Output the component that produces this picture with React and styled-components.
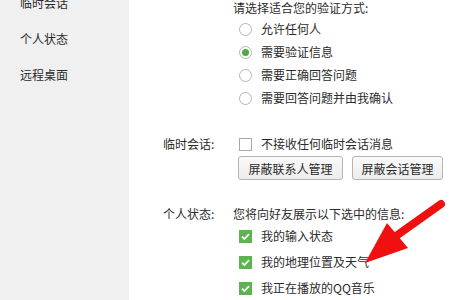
import React from "react";
import styled, { createGlobalStyle } from "styled-components";

const GlobalStyle = createGlobalStyle`
  html, body {
    margin: 0;
    padding: 0;
    background: #ffffff;
  }
  body {
    font-family: "Microsoft YaHei", "Noto Sans CJK SC", "Noto Sans", sans-serif;
    font-size: 12px;
    color: #2b2b2b;
  }
`;

const Page = styled.div`
  position: relative;
  display: flex;
  width: 450px;
  height: 300px;
  overflow: hidden;
`;

const Sidebar = styled.div`
  width: 129px;
  flex-shrink: 0;
  background: #f0f0f0;
  display: flex;
  flex-direction: column;
  gap: 18px;
  padding: 0 0 0 20px;
  margin-top: -6px;
  box-sizing: border-box;
`;

const NavItem = styled.div`
  height: 18px;
  line-height: 18px;
`;

const Main = styled.div`
  flex: 1;
  display: flex;
  flex-direction: column;
  padding-left: 34px;
  margin-top: -2px;
`;

const Section = styled.div`
  display: flex;
  margin-top: ${(p) => p.$top || 0}px;
`;

const Label = styled.div`
  width: 70px;
  flex-shrink: 0;
  height: 20px;
  line-height: 20px;
`;

const Body = styled.div`
  display: flex;
  flex-direction: column;
`;

const Heading = styled.div`
  height: 20px;
  line-height: 20px;
`;

const Options = styled.div`
  display: flex;
  flex-direction: column;
  gap: ${(p) => p.$gap}px;
  padding-left: 6px;
  margin-top: ${(p) => p.$top || 0}px;
`;

const Option = styled.label`
  display: flex;
  align-items: center;
  gap: 9px;
  height: 20px;
  line-height: 20px;
`;

const Radio = styled.span`
  width: 11px;
  height: 11px;
  border-radius: 50%;
  border: 1px solid #b5b5b5;
  background: #fff;
  display: flex;
  align-items: center;
  justify-content: center;
  flex-shrink: 0;

  &::after {
    content: "";
    width: 7px;
    height: 7px;
    border-radius: 50%;
    background: ${(p) => (p.$on ? "#4cae3c" : "transparent")};
  }
`;

const Box = styled.span`
  width: 11px;
  height: 11px;
  border: 1px solid #a8a8a8;
  background: #fff;
  flex-shrink: 0;
`;

const GreenBox = styled.span`
  width: 13px;
  height: 13px;
  background: #5cb54c;
  display: flex;
  align-items: center;
  justify-content: center;
  flex-shrink: 0;
`;

const Buttons = styled.div`
  display: flex;
  gap: 9px;
  padding-left: 5px;
  margin-top: 2px;
`;

const Button = styled.button`
  height: 24px;
  width: ${(p) => p.$w}px;
  padding: 0;
  border: 1px solid #b4b4b4;
  border-radius: 3px;
  background: linear-gradient(#fafafa, #ececec);
  font-family: inherit;
  font-size: 12px;
  color: #2b2b2b;
`;

const Arrow = styled.svg`
  position: absolute;
  left: 360px;
  top: 198px;
`;

const Check = () => (
  <svg width="11" height="11" viewBox="0 0 11 11">
    <path d="M2 5.6 L4.4 8 L9 3.2" fill="none" stroke="#fff" strokeWidth="1.8" />
  </svg>
);

const radios = ["允许任何人", "需要验证信息", "需要正确回答问题", "需要回答问题并由我确认"];
const states = ["我的输入状态", "我的地理位置及天气", "我正在播放的QQ音乐"];

export default function App() {
  return (
    <Page>
      <GlobalStyle />
      <Sidebar>
        <NavItem>临时会话</NavItem>
        <NavItem>个人状态</NavItem>
        <NavItem>远程桌面</NavItem>
      </Sidebar>
      <Main>
        <Section>
          <Label />
          <Body>
            <Heading>请选择适合您的验证方式:</Heading>
            <Options $gap={3} $top={1}>
              {radios.map((r, i) => (
                <Option key={r}>
                  <Radio $on={i === 1} />
                  {r}
                </Option>
              ))}
            </Options>
          </Body>
        </Section>
        <Section $top={26}>
          <Label>临时会话:</Label>
          <Body>
            <Options $gap={0}>
              <Option>
                <Box />
                不接收任何临时会话消息
              </Option>
            </Options>
            <Buttons>
              <Button $w={105}>屏蔽联系人管理</Button>
              <Button $w={91}>屏蔽会话管理</Button>
            </Buttons>
          </Body>
        </Section>
        <Section $top={24}>
          <Label>个人状态:</Label>
          <Body>
            <Heading>您将向好友展示以下选中的信息:</Heading>
            <Options $gap={6} $top={2}>
              {states.map((s) => (
                <Option key={s}>
                  <GreenBox>
                    <Check />
                  </GreenBox>
                  {s}
                </Option>
              ))}
            </Options>
          </Body>
        </Section>
      </Main>
      <Arrow width="90" height="70" viewBox="0 0 90 70">
        <line x1="81" y1="6" x2="36" y2="38" stroke="#f01010" strokeWidth="8" strokeLinecap="round" />
        <polygon points="5,65 27,25 48,50" fill="#f01010" />
      </Arrow>
    </Page>
  );
}
